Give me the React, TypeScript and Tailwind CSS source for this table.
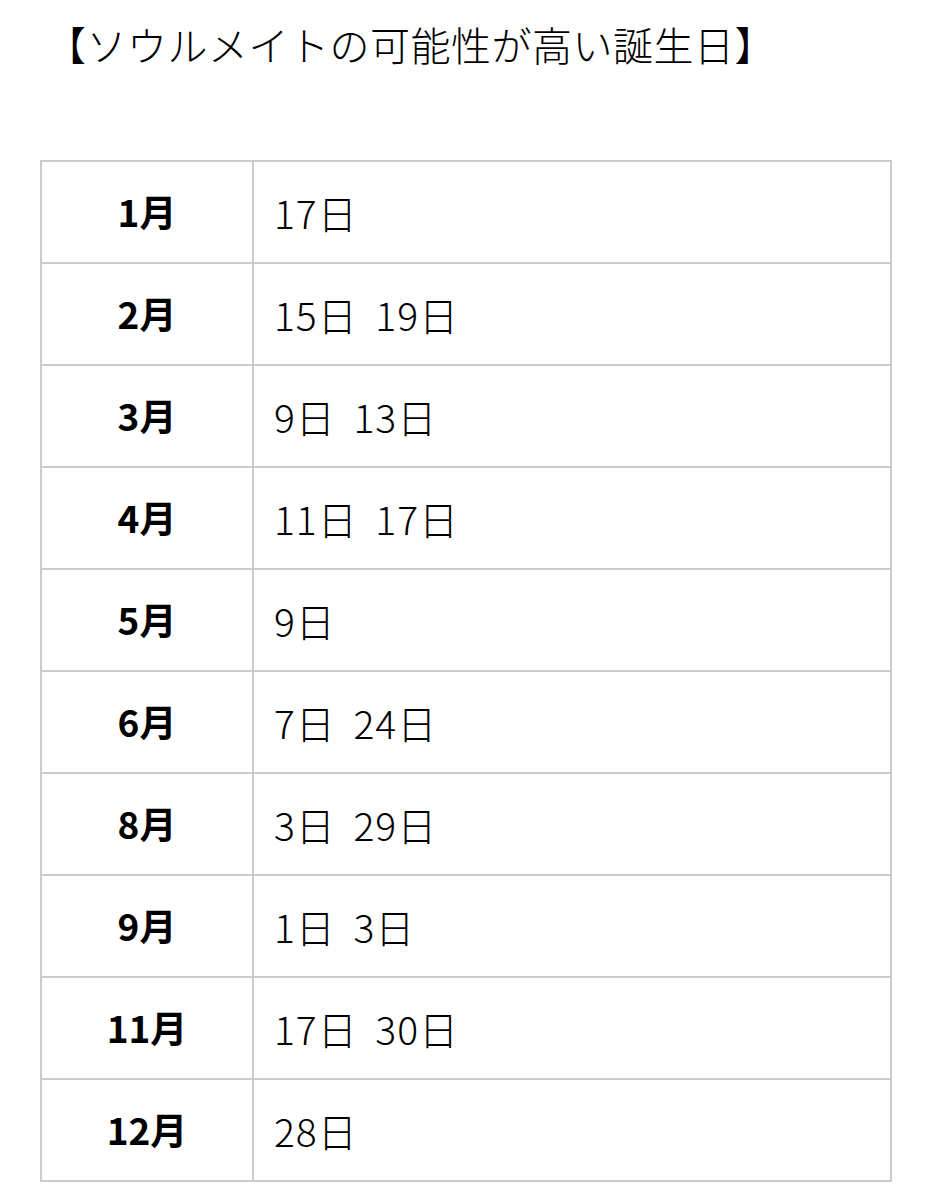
const rows: [string, string][] = [
  ["1月", "17日"],
  ["2月", "15日 19日"],
  ["3月", "9日 13日"],
  ["4月", "11日 17日"],
  ["5月", "9日"],
  ["6月", "7日 24日"],
  ["8月", "3日 29日"],
  ["9月", "1日 3日"],
  ["11月", "17日 30日"],
  ["12月", "28日"],
];

export default function App() {
  return (
    <div
      className="w-[931px] h-[1200px] bg-white text-black"
      style={{ fontFamily: '"Noto Sans CJK JP", "Noto Sans", sans-serif' }}
    >
      <h1 className="pt-[14px] pl-[46px] text-[40px] leading-[60px] font-light tracking-[0.5px]">
        【ソウルメイトの可能性が高い誕生日】
      </h1>
      <table className="ml-[40px] mt-[86px] w-[852px] border-collapse">
        <tbody>
          {rows.map(([month, days]) => (
            <tr key={month} className="h-[102px]">
              <th className="w-[212px] border-2 border-[#cccccc] text-center text-[37px] font-bold">
                {month}
              </th>
              <td className="border-2 border-[#cccccc] pl-[20px] text-[39px] font-light tracking-[1px] [word-spacing:8px]">
                {days}
              </td>
            </tr>
          ))}
        </tbody>
      </table>
    </div>
  );
}
